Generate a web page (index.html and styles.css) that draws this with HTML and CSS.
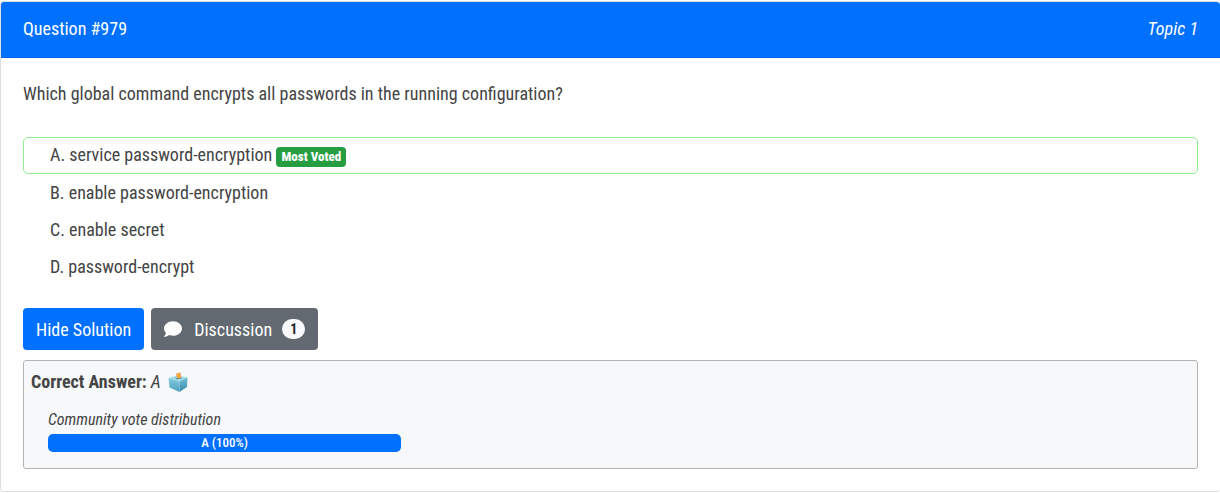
FILE: index.html
```html
<!DOCTYPE html>
<html lang="en">
<head>
<meta charset="utf-8">
<meta name="viewport" content="width=device-width, initial-scale=1">
<title>Question #979</title>
<link rel="stylesheet" href="styles.css">
</head>
<body>
<article class="card">
  <header class="card-header"><span>Question #979</span><em>Topic 1</em></header>
  <div class="card-body">
    <p class="question">Which global command encrypts all passwords in the running configuration?</p>
    <ul class="choices">
      <li class="choice voted">A. service password-encryption <span class="badge">Most Voted</span></li>
      <li class="choice">B. enable password-encryption</li>
      <li class="choice">C. enable secret</li>
      <li class="choice">D. password-encrypt</li>
    </ul>
    <div class="actions">
      <button class="btn primary" type="button">Hide Solution</button>
      <button class="btn secondary" type="button">
        <svg class="comment" viewBox="0 0 512 512" aria-hidden="true"><path fill="currentColor" d="M256 32C114.600 32 0 125.100 0 240c0 49.600 21.400 95 57 130.700C44.500 421.100 2.700 466 2.200 466.500c-2.200 2.300-2.800 5.700-1.500 8.700S4.800 480 8 480c66.300 0 116-31.800 140.600-51.400 32.700 12.300 69 19.400 107.400 19.400 141.400 0 256-93.100 256-208S397.400 32 256 32z"/></svg>
        <span>Discussion</span>
        <span class="count">1</span>
      </button>
    </div>
    <section class="answer">
      <p class="correct">
        <strong>Correct Answer:</strong>
        <em>A</em>
        <svg class="ballot" viewBox="0 0 20 20" aria-hidden="true">
          <defs>
            <linearGradient id="left" x1="0" y1="0" x2="0" y2="1"><stop offset="0" stop-color="#86cbe0"/><stop offset="1" stop-color="#4ba0bd"/></linearGradient>
            <linearGradient id="right" x1="0" y1="0" x2="0" y2="1"><stop offset="0" stop-color="#70bdd6"/><stop offset="1" stop-color="#398ba9"/></linearGradient>
          </defs>
          <path fill="#a0dbe9" d="M.5 6L9 3.500l10.500 2L11.500 9.500z"/>
          <path fill="url(#left)" d="M.5 6l11 3.500V20L1.500 15.500z"/>
          <path fill="url(#right)" d="M19.500 5.500l-8 4V20l7.500-5z"/>
          <path fill="#52889b" d="M7.500 6l6-.5.5 1-5.500.7z"/>
          <path fill="#f3a647" d="M8 1.500L12.500.5l1 5.300-4.500.8z"/>
        </svg>
      </p>
      <div class="votes">
        <em class="votes-title">Community vote distribution</em>
        <div class="track"><div class="bar" style="width: 100%">A (100%)</div></div>
      </div>
    </section>
  </div>
</article>
</body>
</html>
```
FILE: styles.css
```css
* { box-sizing: border-box; }

body {
  margin: 0;
  padding-top: 1px;
  background: #fff;
  color: #444;
  font-family: "Roboto Condensed", Roboto, sans-serif;
  font-size: 18px;
  line-height: 27px;
}

p, ul { margin: 0; padding: 0; }

.card {
  border: 1px solid #dfdfdf;
  border-right: 0;
  border-radius: 4px;
  overflow: hidden;
}

.card-header {
  display: flex;
  justify-content: space-between;
  padding: 13px 22px 15px;
  border-bottom: 1px solid #0068e8;
  background: #0070ff;
  color: #fff;
}

.card-body { padding: 22px; }

.question { margin-bottom: 30px; }

.choices { list-style: none; }

.choice { padding: 5px 27px; }

.voted {
  padding: 3px 26px 5px;
  border: 1px solid #90ee90;
  border-radius: 5px;
}

.badge {
  display: inline-block;
  padding: 3px 5px;
  border-radius: 4px;
  background: #259d40;
  color: #fff;
  font-size: 13px;
  font-weight: 800;
  line-height: 14px;
}

.actions {
  display: flex;
  gap: 7px;
  margin: 23px 0 10px;
}

.btn {
  display: flex;
  align-items: center;
  height: 42px;
  padding: 0 13px;
  border: 0;
  border-radius: 4px;
  color: #fff;
  font: inherit;
  cursor: pointer;
}

.primary { background: #0070ff; }
.secondary { background: #626970; }

.comment {
  width: 18px;
  height: 18px;
  margin-right: 12px;
}

.count {
  margin-left: 10px;
  padding: 3px 8px;
  border-radius: 10px;
  background: #f8f9fa;
  color: #212529;
  font-size: 14px;
  font-weight: 700;
  line-height: 14px;
}

.answer {
  padding: 7px;
  padding-bottom: 16px;
  border: 1px solid #b3b3b3;
  border-radius: 3px;
  background: #f7f8fa;
}

.correct {
  display: flex;
  align-items: center;
  gap: 4px;
}

.ballot {
  width: 20px;
  height: 20px;
  margin-left: 3px;
}

.votes {
  max-width: 370px;
  margin-top: 13px;
  padding-left: 17px;
}

.votes-title {
  display: block;
  font-size: 16px;
  line-height: 24px;
}

.track { margin-top: 2px; }

.bar {
  border-radius: 5px;
  background: #0070ff;
  color: #fff;
  font-size: 13px;
  font-weight: 500;
  line-height: 18px;
  text-align: center;
}
```
